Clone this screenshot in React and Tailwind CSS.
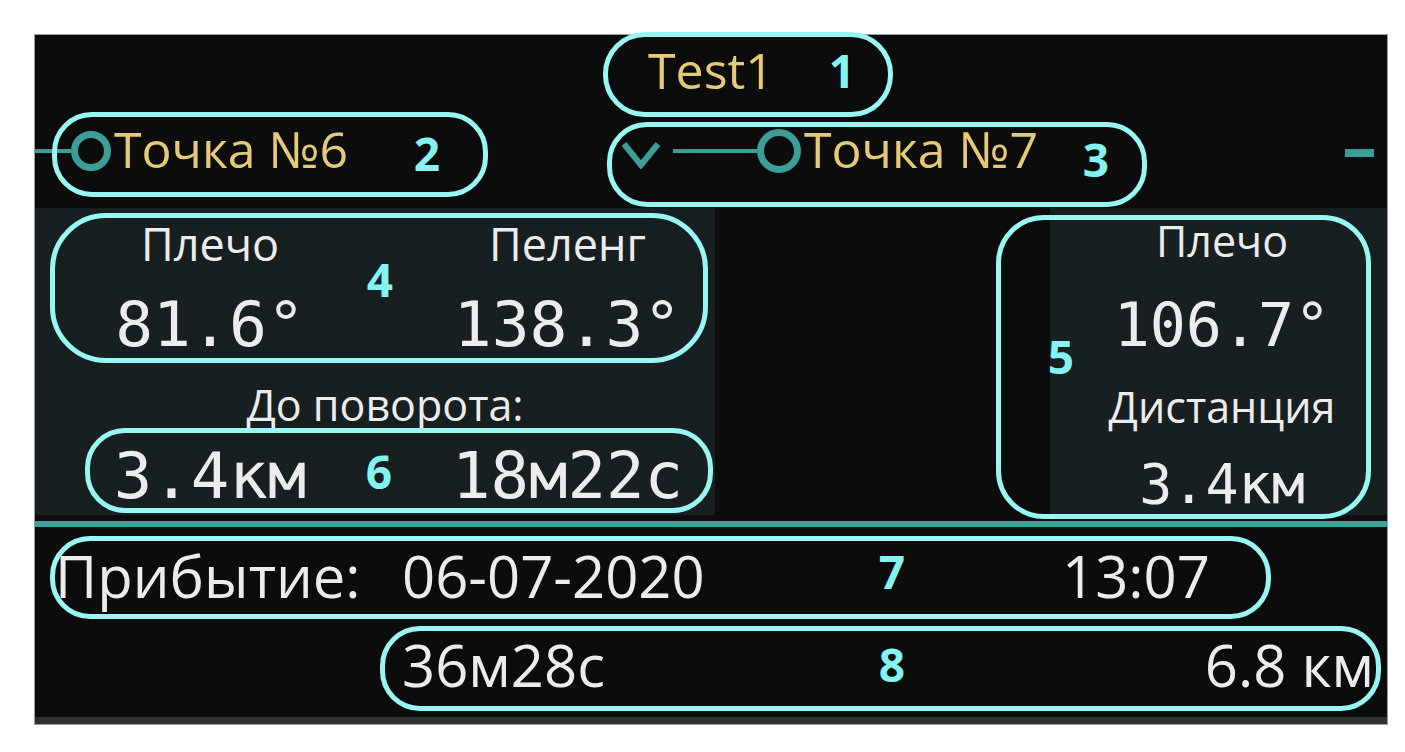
import React from 'react';

const sans = "font-['Open_Sans','Noto_Sans',sans-serif]";
const mono = "font-['DejaVu_Sans_Mono','Liberation_Mono',monospace]";

// annotation overlays drawn on top of the screenshot
const marks = [
  { n: '1', box: 'left-[603px] top-[32px] w-[290px] h-[85px] rounded-[42px]', num: 'left-[822px] top-[47px]' },
  { n: '2', box: 'left-[52px] top-[112px] w-[436px] h-[85px] rounded-[40px]', num: 'left-[407px] top-[130px]' },
  { n: '3', box: 'left-[607px] top-[122px] w-[540px] h-[85px] rounded-[40px]', num: 'left-[1076px] top-[136px]' },
  { n: '4', box: 'left-[50px] top-[213px] w-[658px] h-[150px] rounded-[56px]', num: 'left-[360px] top-[256px]' },
  { n: '5', box: 'left-[996px] top-[215px] w-[375px] h-[304px] rounded-[48px]', num: 'left-[1041px] top-[333px]' },
  { n: '6', box: 'left-[85px] top-[428px] w-[628px] h-[85px] rounded-[40px]', num: 'left-[359px] top-[448px]' },
  { n: '7', box: 'left-[50px] top-[536px] w-[1221px] h-[83px] rounded-[40px]', num: 'left-[872px] top-[548px]' },
  { n: '8', box: 'left-[380px] top-[626px] w-[1001px] h-[85px] rounded-[40px]', num: 'left-[872px] top-[641px]' },
];

const Ring = ({ size }) => (
  <div className={`${size} shrink-0 rounded-full border-[7px] border-[#3b9f98] mt-[4px]`} />
);

export default function App() {
  return (
    <div className="relative w-[1405px] h-[752px] bg-white overflow-hidden">
      <div className="absolute left-[34px] top-[34px] w-[1354px] h-[691px] border border-[#9a9a9a] bg-[#0c0c0c] flex flex-col">
        {/* title */}
        <div className={`h-[78px] pt-[10px] text-center ${sans}`}>
          <span className="text-[50px] font-medium leading-none text-[#e5ca78]">Test1</span>
        </div>

        {/* route points */}
        <div className={`h-[95px] flex items-start pt-[11px] ${sans}`}>
          <div className="w-[585px] h-[50px] flex items-center">
            <div className="w-[36px] h-[4px] bg-[#3b9f98] mt-[4px]" />
            <Ring size="w-[40px] h-[40px]" />
            <span className="ml-[3px] text-[50px] font-medium leading-none text-[#e5ca78]">Точка №6</span>
          </div>
          <div className="h-[50px] flex items-center">
            <svg width="42" height="28" viewBox="0 0 42 28" className="mt-[12px]">
              <polyline points="4,3 21,24 38,3" fill="none" stroke="#3b9f98" strokeWidth="6" />
            </svg>
            <div className="ml-[11px] w-[84px] h-[4px] bg-[#3b9f98] mt-[4px]" />
            <Ring size="w-[44px] h-[44px]" />
            <span className="ml-[3px] text-[50px] font-medium leading-none text-[#e5ca78]">Точка №7</span>
          </div>
          <div className="ml-auto mr-[13px] mt-[25px] w-[29px] h-[8px] bg-[#3b9f98]" />
        </div>

        {/* legs */}
        <div className="h-[307px] flex text-[#ececec]">
          <div className="w-[680px] bg-[#171f21] flex flex-col">
            <div className="flex pt-[13px]">
              <div className="w-[350px] flex flex-col items-center">
                <span className={`${sans} text-[45px] font-medium leading-none`}>Плечо</span>
                <span className={`${mono} mt-[27px] text-[63px] leading-none`}>81.6°</span>
              </div>
              <div className="ml-[35px] w-[295px] flex flex-col items-center">
                <span className={`${sans} text-[45px] font-medium leading-none`}>Пеленг</span>
                <span className={`${mono} mt-[27px] text-[63px] leading-none`}>138.3°</span>
              </div>
            </div>
            <div className={`${sans} mt-[27px] pl-[20px] text-center text-[43px] font-medium leading-none`}>До поворота:</div>
            <div className={`${mono} flex mt-[18px] text-[64px] leading-none`}>
              <div className="w-[350px] text-center">3.4км</div>
              <div className="ml-[35px] w-[295px] text-center">18м22с</div>
            </div>
          </div>
          <div className="w-[335px]" />
          <div className="flex-1 bg-[#171f21] flex flex-col items-center pl-[7px] pt-[11px]">
            <span className={`${sans} text-[43px] font-medium leading-none`}>Плечо</span>
            <span className={`${mono} mt-[33px] text-[60px] leading-none`}>106.7°</span>
            <span className={`${sans} mt-[30px] text-[43px] font-medium leading-none`}>Дистанция</span>
            <span className={`${mono} mt-[29px] text-[55px] leading-none`}>3.4км</span>
          </div>
        </div>

        <div className="h-[6px]" />
        <div className="h-[6px] bg-[#3fa39b]" />

        {/* arrival */}
        <div className={`h-[190px] flex flex-col ${sans} text-[58px] font-medium leading-none text-[#ececec]`}>
          <div className="flex mt-[20px] pl-[20px]">
            <span className="w-[347px]">Прибытие:</span>
            <span className="w-[660px]">06-07-2020</span>
            <span>13:07</span>
          </div>
          <div className="flex justify-between mt-[31px] pl-[367px] pr-[13px]">
            <span>36м28с</span>
            <span>6.8 км</span>
          </div>
        </div>

        <div className="h-[7px] bg-[#2c3133]" />
      </div>

      {marks.map((m) => (
        <React.Fragment key={m.n}>
          <div className={`absolute ${m.box} border-[5px] border-[#98f7f2]`} />
          <div className={`absolute ${m.num} w-[40px] text-center font-['Open_Sans',sans-serif] font-bold text-[46px] leading-none text-[#84f3f1]`}>
            {m.n}
          </div>
        </React.Fragment>
      ))}
    </div>
  );
}
